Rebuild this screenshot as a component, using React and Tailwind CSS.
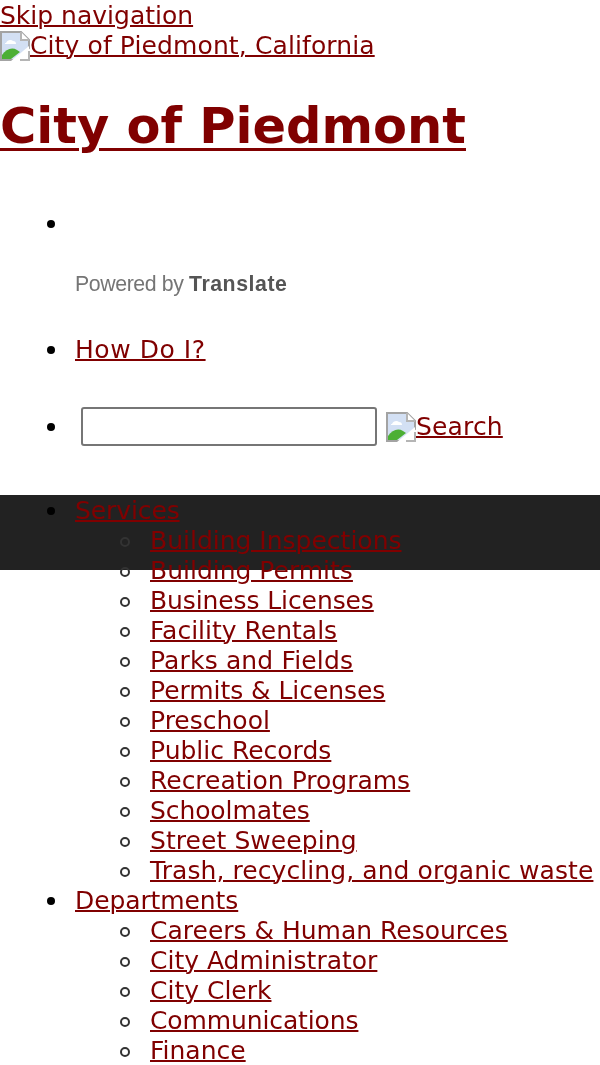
const services = [
  { name: "Building Inspections" },
  { name: "Building Permits" },
  { name: "Business Licenses", cls: "tracking-[-0.1px]" },
  { name: "Facility Rentals" },
  { name: "Parks and Fields", cls: "tracking-[0.15px]" },
  { name: "Permits & Licenses", cls: "tracking-[-0.05px]" },
  { name: "Preschool" },
  { name: "Public Records" },
  { name: "Recreation Programs" },
  { name: "Schoolmates", cls: "tracking-[-0.1px]" },
  { name: "Street Sweeping", cls: "tracking-[0.07px]" },
  { name: "Trash, recycling, and organic waste", cls: "tracking-[0.08px]" },
];

const departments = [
  { name: "Careers & Human Resources" },
  { name: "City Administrator" },
  { name: "City Clerk" },
  { name: "Communications", cls: "tracking-[-0.12px]" },
  { name: "Finance" },
];

const linkClass = "text-[#800000] underline decoration-2";
const discClass =
  "relative before:absolute before:left-[-28px] before:top-[11px] before:h-2 before:w-2 before:rounded-full before:bg-black";
const searchDiscClass =
  "relative before:absolute before:left-[-28px] before:top-[16px] before:h-2 before:w-2 before:rounded-full before:bg-black";
const circleClass =
  "relative before:absolute before:left-[-30px] before:top-[11px] before:h-[10px] before:w-[10px] before:rounded-full before:border-2 before:border-[#333333]";

function BrokenImage({ className }) {
  return (
    <svg viewBox="0 0 30 30" className={className}>
      <path d="M1 1H21L29 9V17L15 29H1Z" fill="#d3e0f4" stroke="#a3a3a3" strokeWidth="2" />
      <path d="M21 1V9H29" fill="#fff" stroke="#b5b5b5" strokeWidth="2" />
      <path d="M6 12c1-3 5-4 7-2 2 0 3 1 3 3H5c0-1 0-1 1-1z" fill="#fff" />
      <path d="M2 28V24C6 18 12 16 17 19L20 21L11 28Z" fill="#4caf35" />
      <path d="M11 30L29 15V21L19 30Z" fill="#fff" />
      <path d="M20 29H29V20" fill="none" stroke="#b5b5b5" strokeWidth="2" />
    </svg>
  );
}

function SubList({ items }) {
  return (
    <ul className="list-none pl-[75px]">
      {items.map((item) => (
        <li key={item.name} className={circleClass}>
          <a href="#" className={`${linkClass} ${item.cls || ""}`}>
            {item.name}
          </a>
        </li>
      ))}
    </ul>
  );
}

export default function App() {
  return (
    <div className="relative h-[1065px] overflow-hidden bg-white font-['DejaVu_Sans',sans-serif] text-[25px] leading-[30px] text-black">
      <div className="absolute inset-x-0 top-[495px] h-[75px] bg-[#222222]" />

      <div className="relative pt-px blur-[0.5px]">
        <a href="#" className={`block h-[30px] w-fit ${linkClass}`}>
          Skip navigation
        </a>
        <a href="#" className={`flex h-[30px] w-fit items-start tracking-[0.11px] ${linkClass}`}>
          <BrokenImage className="h-[30px] w-[30px]" />
          City of Piedmont, California
        </a>

        <h1 className="mt-[35px] text-[49.5px] font-bold leading-[60px]">
          <a href="#" className="text-[#800000] underline decoration-[3px] underline-offset-[5px]">
            City of Piedmont
          </a>
        </h1>

        <ul className="mt-[53px] list-none pl-[75px]">
          <li className={discClass}>
            <div className="h-[30px]">&nbsp;</div>
            <div className="mt-[30px] font-['Liberation_Sans',sans-serif] text-[21.3px] tracking-[-0.4px] text-[#757575]">
              Powered by{" "}
              <span className="font-bold tracking-[0.55px] text-[#555555]">Translate</span>
            </div>
          </li>
          <li className={`mt-[36px] ${discClass}`}>
            <a href="#" className={`tracking-[0.55px] ${linkClass}`}>
              How Do I?
            </a>
          </li>
          <li className={`mt-[42px] ${searchDiscClass}`}>
            <div className="flex h-[39px] items-center">
              <input
                type="text"
                className="ml-[6px] h-[39px] w-[296px] rounded-[3px] border-2 border-[#767676] bg-white"
              />
              <a href="#" className={`ml-[9px] flex items-center pt-px tracking-[0.15px] ${linkClass}`}>
                <BrokenImage className="h-[30px] w-[30px]" />
                Search
              </a>
            </div>
          </li>
          <li className={`mt-[50px] ${discClass}`}>
            <a href="#" className={`tracking-[-0.1px] ${linkClass}`}>
              Services
            </a>
            <SubList items={services} />
          </li>
          <li className={discClass}>
            <a href="#" className={`tracking-[-0.1px] ${linkClass}`}>
              Departments
            </a>
            <SubList items={departments} />
          </li>
        </ul>
      </div>
    </div>
  );
}
